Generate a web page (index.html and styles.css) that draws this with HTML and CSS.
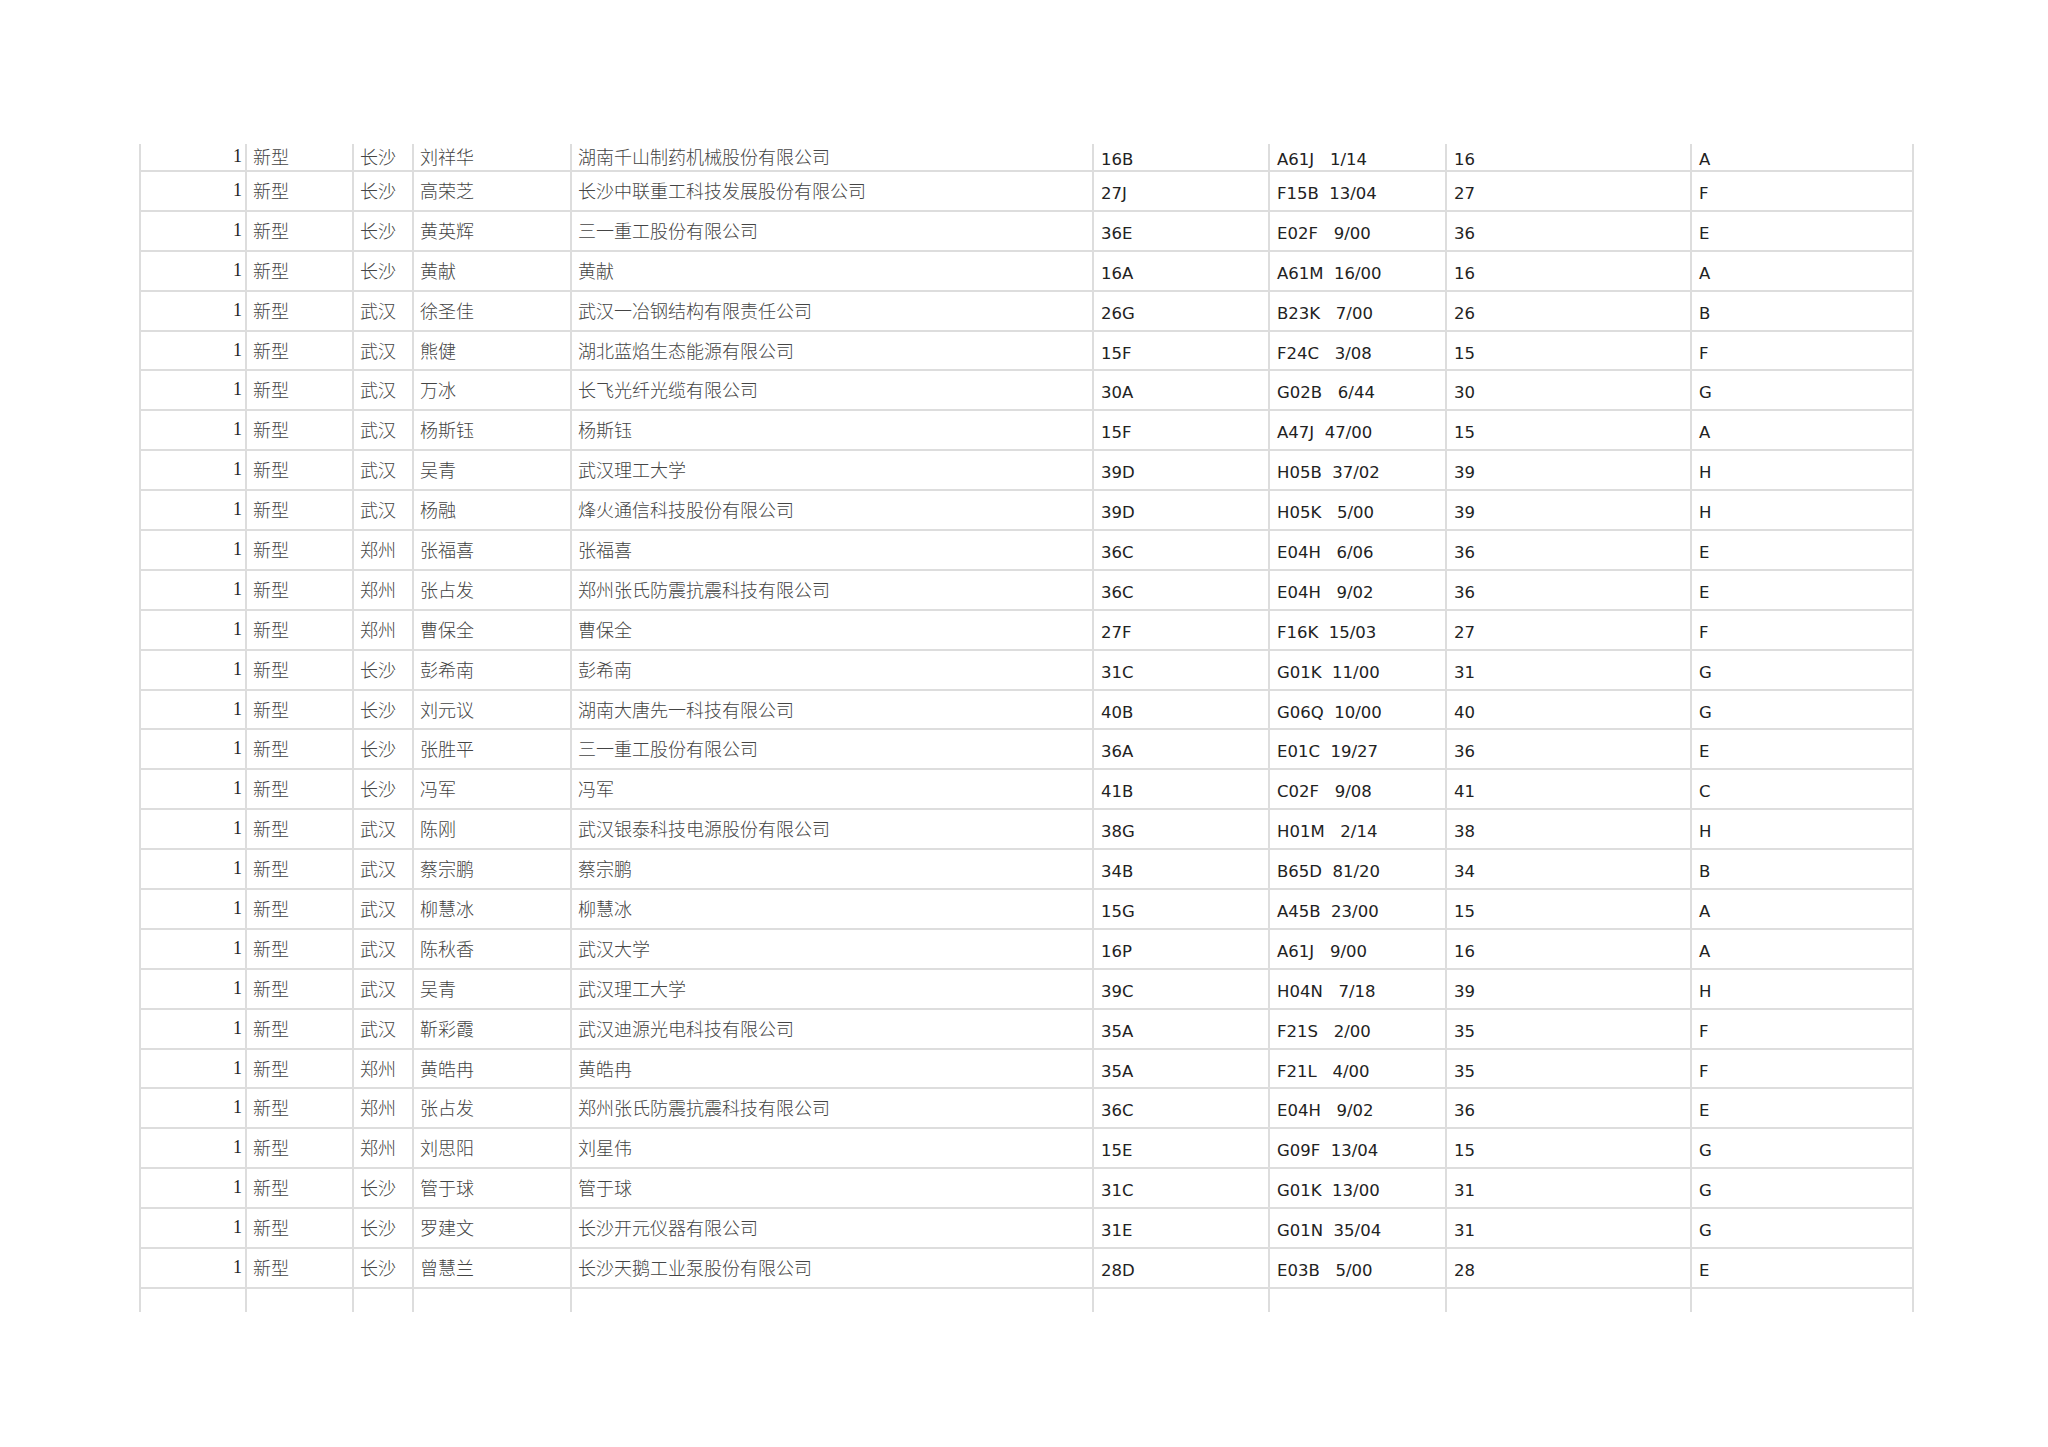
FILE: index.html
```html
<!DOCTYPE html>
<html lang="zh-CN">
<head>
<meta charset="utf-8">
<title>新型</title>
<link rel="stylesheet" href="styles.css">
</head>
<body>
<table class="sheet">
<colgroup>
<col class="w1"><col class="w2"><col class="w3"><col class="w4"><col class="w5"><col class="w6"><col class="w7"><col class="w8"><col class="w9">
</colgroup>
<tbody>
<tr class="top"><td>1</td><td>新型</td><td>长沙</td><td>刘祥华</td><td>湖南千山制药机械股份有限公司</td><td class="l">16B</td><td class="l">A61J   1/14</td><td class="l">16</td><td class="l">A</td></tr>
<tr class="row"><td>1</td><td>新型</td><td>长沙</td><td>高荣芝</td><td>长沙中联重工科技发展股份有限公司</td><td class="l">27J</td><td class="l">F15B  13/04</td><td class="l">27</td><td class="l">F</td></tr>
<tr class="row"><td>1</td><td>新型</td><td>长沙</td><td>黄英辉</td><td>三一重工股份有限公司</td><td class="l">36E</td><td class="l">E02F   9/00</td><td class="l">36</td><td class="l">E</td></tr>
<tr class="row"><td>1</td><td>新型</td><td>长沙</td><td>黄献</td><td>黄献</td><td class="l">16A</td><td class="l">A61M  16/00</td><td class="l">16</td><td class="l">A</td></tr>
<tr class="row"><td>1</td><td>新型</td><td>武汉</td><td>徐圣佳</td><td>武汉一冶钢结构有限责任公司</td><td class="l">26G</td><td class="l">B23K   7/00</td><td class="l">26</td><td class="l">B</td></tr>
<tr class="row"><td>1</td><td>新型</td><td>武汉</td><td>熊健</td><td>湖北蓝焰生态能源有限公司</td><td class="l">15F</td><td class="l">F24C   3/08</td><td class="l">15</td><td class="l">F</td></tr>
<tr class="row"><td>1</td><td>新型</td><td>武汉</td><td>万冰</td><td>长飞光纤光缆有限公司</td><td class="l">30A</td><td class="l">G02B   6/44</td><td class="l">30</td><td class="l">G</td></tr>
<tr class="row"><td>1</td><td>新型</td><td>武汉</td><td>杨斯钰</td><td>杨斯钰</td><td class="l">15F</td><td class="l">A47J  47/00</td><td class="l">15</td><td class="l">A</td></tr>
<tr class="row"><td>1</td><td>新型</td><td>武汉</td><td>吴青</td><td>武汉理工大学</td><td class="l">39D</td><td class="l">H05B  37/02</td><td class="l">39</td><td class="l">H</td></tr>
<tr class="row"><td>1</td><td>新型</td><td>武汉</td><td>杨融</td><td>烽火通信科技股份有限公司</td><td class="l">39D</td><td class="l">H05K   5/00</td><td class="l">39</td><td class="l">H</td></tr>
<tr class="row"><td>1</td><td>新型</td><td>郑州</td><td>张福喜</td><td>张福喜</td><td class="l">36C</td><td class="l">E04H   6/06</td><td class="l">36</td><td class="l">E</td></tr>
<tr class="row"><td>1</td><td>新型</td><td>郑州</td><td>张占发</td><td>郑州张氏防震抗震科技有限公司</td><td class="l">36C</td><td class="l">E04H   9/02</td><td class="l">36</td><td class="l">E</td></tr>
<tr class="row"><td>1</td><td>新型</td><td>郑州</td><td>曹保全</td><td>曹保全</td><td class="l">27F</td><td class="l">F16K  15/03</td><td class="l">27</td><td class="l">F</td></tr>
<tr class="row"><td>1</td><td>新型</td><td>长沙</td><td>彭希南</td><td>彭希南</td><td class="l">31C</td><td class="l">G01K  11/00</td><td class="l">31</td><td class="l">G</td></tr>
<tr class="row"><td>1</td><td>新型</td><td>长沙</td><td>刘元议</td><td>湖南大唐先一科技有限公司</td><td class="l">40B</td><td class="l">G06Q  10/00</td><td class="l">40</td><td class="l">G</td></tr>
<tr class="row"><td>1</td><td>新型</td><td>长沙</td><td>张胜平</td><td>三一重工股份有限公司</td><td class="l">36A</td><td class="l">E01C  19/27</td><td class="l">36</td><td class="l">E</td></tr>
<tr class="row"><td>1</td><td>新型</td><td>长沙</td><td>冯军</td><td>冯军</td><td class="l">41B</td><td class="l">C02F   9/08</td><td class="l">41</td><td class="l">C</td></tr>
<tr class="row"><td>1</td><td>新型</td><td>武汉</td><td>陈刚</td><td>武汉银泰科技电源股份有限公司</td><td class="l">38G</td><td class="l">H01M   2/14</td><td class="l">38</td><td class="l">H</td></tr>
<tr class="row"><td>1</td><td>新型</td><td>武汉</td><td>蔡宗鹏</td><td>蔡宗鹏</td><td class="l">34B</td><td class="l">B65D  81/20</td><td class="l">34</td><td class="l">B</td></tr>
<tr class="row"><td>1</td><td>新型</td><td>武汉</td><td>柳慧冰</td><td>柳慧冰</td><td class="l">15G</td><td class="l">A45B  23/00</td><td class="l">15</td><td class="l">A</td></tr>
<tr class="row"><td>1</td><td>新型</td><td>武汉</td><td>陈秋香</td><td>武汉大学</td><td class="l">16P</td><td class="l">A61J   9/00</td><td class="l">16</td><td class="l">A</td></tr>
<tr class="row"><td>1</td><td>新型</td><td>武汉</td><td>吴青</td><td>武汉理工大学</td><td class="l">39C</td><td class="l">H04N   7/18</td><td class="l">39</td><td class="l">H</td></tr>
<tr class="row"><td>1</td><td>新型</td><td>武汉</td><td>靳彩霞</td><td>武汉迪源光电科技有限公司</td><td class="l">35A</td><td class="l">F21S   2/00</td><td class="l">35</td><td class="l">F</td></tr>
<tr class="row"><td>1</td><td>新型</td><td>郑州</td><td>黄皓冉</td><td>黄皓冉</td><td class="l">35A</td><td class="l">F21L   4/00</td><td class="l">35</td><td class="l">F</td></tr>
<tr class="row"><td>1</td><td>新型</td><td>郑州</td><td>张占发</td><td>郑州张氏防震抗震科技有限公司</td><td class="l">36C</td><td class="l">E04H   9/02</td><td class="l">36</td><td class="l">E</td></tr>
<tr class="row"><td>1</td><td>新型</td><td>郑州</td><td>刘思阳</td><td>刘星伟</td><td class="l">15E</td><td class="l">G09F  13/04</td><td class="l">15</td><td class="l">G</td></tr>
<tr class="row"><td>1</td><td>新型</td><td>长沙</td><td>管于球</td><td>管于球</td><td class="l">31C</td><td class="l">G01K  13/00</td><td class="l">31</td><td class="l">G</td></tr>
<tr class="row"><td>1</td><td>新型</td><td>长沙</td><td>罗建文</td><td>长沙开元仪器有限公司</td><td class="l">31E</td><td class="l">G01N  35/04</td><td class="l">31</td><td class="l">G</td></tr>
<tr class="row"><td>1</td><td>新型</td><td>长沙</td><td>曾慧兰</td><td>长沙天鹅工业泵股份有限公司</td><td class="l">28D</td><td class="l">E03B   5/00</td><td class="l">28</td><td class="l">E</td></tr>
<tr class="end"><td></td><td></td><td></td><td></td><td></td><td></td><td></td><td></td><td></td></tr>
</tbody>
</table>
</body>
</html>
```

FILE: styles.css
```css
html, body {
  margin: 0;
  padding: 0;
  background: #ffffff;
}

.sheet {
  margin: 144px 0 0 139px;
  border-collapse: separate;
  border-spacing: 0;
  table-layout: fixed;
  width: 1775px;
  color: #444444;
}

.w1 { width: 108px; }
.w2 { width: 107px; }
.w3 { width: 60px; }
.w4 { width: 158px; }
.w5 { width: 522px; }
.w6 { width: 176px; }
.w7 { width: 177px; }
.w8 { width: 245px; }
.w9 { width: 222px; }

.sheet td {
  box-sizing: border-box;
  border-right: 2px solid #dddddd;
  border-bottom: 2px solid #dddddd;
  padding: 0 4px 2px 6px;
  vertical-align: middle;
  white-space: pre;
  font-family: "Noto Sans CJK SC", sans-serif;
  font-weight: 300;
  font-size: 18px;
  line-height: 20px;
}

.sheet td:first-child {
  border-left: 2px solid #dddddd;
  text-align: right;
  font-family: "Liberation Serif", serif;
  font-weight: 400;
  font-size: 18px;
  color: #222222;
  padding-right: 3px;
}

.sheet td.l {
  font-family: "DejaVu Sans", sans-serif;
  font-weight: 400;
  font-size: 16.5px;
  color: #222222;
  padding-left: 7px;
  padding-top: 6px;
  padding-bottom: 0;
}

.top { height: 27px; }
.top td { padding-top: 0; padding-bottom: 3px; }
.top td.l { padding-top: 6px; padding-bottom: 0; }

.row { height: 39.9px; }

.end { height: 23px; }
.end td { border-bottom: none; }
```
